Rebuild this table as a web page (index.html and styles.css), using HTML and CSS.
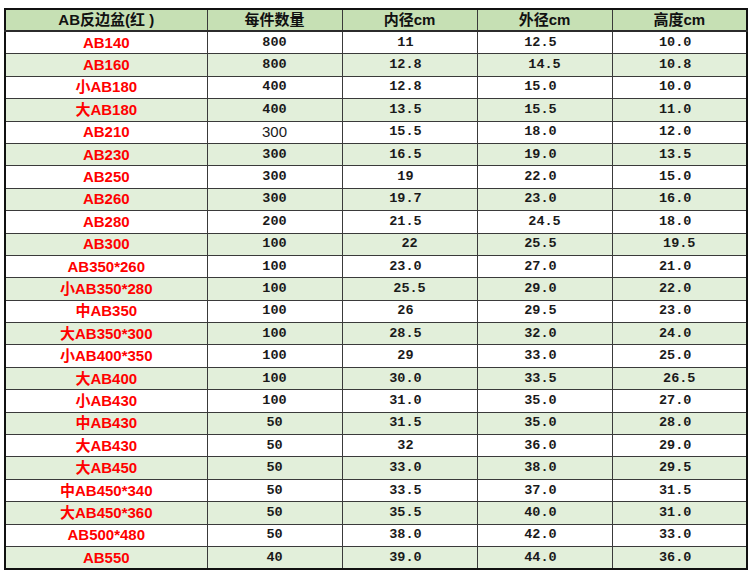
FILE: index.html
```html
<!DOCTYPE html>
<html lang="zh">
<head>
<meta charset="utf-8">
<link rel="stylesheet" href="styles.css">
</head>
<body>
<table class="spec">
<colgroup><col class="c1"><col class="c2"><col class="c2"><col class="c2"><col class="c2"></colgroup>
<thead>
<tr><th>AB反边盆(红 )</th><th>每件数量</th><th>内径cm</th><th>外径cm</th><th>高度cm</th></tr>
</thead>
<tbody>
<tr><td class="name">AB140</td><td>800</td><td>11 </td><td>12.5 </td><td>10.0 </td></tr>
<tr><td class="name">AB160</td><td>800</td><td>12.8 </td><td>14.5</td><td>10.8 </td></tr>
<tr><td class="name">小AB180</td><td>400</td><td>12.8 </td><td>15.0 </td><td>10.0 </td></tr>
<tr><td class="name">大AB180</td><td>400</td><td>13.5 </td><td>15.5 </td><td>11.0 </td></tr>
<tr><td class="name">AB210</td><td class="alt">300</td><td>15.5 </td><td>18.0 </td><td>12.0 </td></tr>
<tr><td class="name">AB230</td><td>300</td><td>16.5 </td><td>19.0 </td><td>13.5 </td></tr>
<tr><td class="name">AB250</td><td>300</td><td>19 </td><td>22.0 </td><td>15.0 </td></tr>
<tr><td class="name">AB260</td><td>300</td><td>19.7 </td><td>23.0 </td><td>16.0 </td></tr>
<tr><td class="name">AB280</td><td>200</td><td>21.5 </td><td>24.5</td><td>18.0 </td></tr>
<tr><td class="name">AB300</td><td>100</td><td>22</td><td>25.5 </td><td>19.5</td></tr>
<tr><td class="name">AB350*260</td><td>100</td><td>23.0 </td><td>27.0 </td><td>21.0 </td></tr>
<tr><td class="name">小AB350*280</td><td>100</td><td>25.5</td><td>29.0 </td><td>22.0 </td></tr>
<tr><td class="name">中AB350</td><td>100</td><td>26 </td><td>29.5 </td><td>23.0 </td></tr>
<tr><td class="name">大AB350*300</td><td>100</td><td>28.5 </td><td>32.0 </td><td>24.0 </td></tr>
<tr><td class="name">小AB400*350</td><td>100</td><td>29 </td><td>33.0 </td><td>25.0 </td></tr>
<tr><td class="name">大AB400</td><td>100</td><td>30.0 </td><td>33.5 </td><td>26.5</td></tr>
<tr><td class="name">小AB430</td><td>100</td><td>31.0 </td><td>35.0 </td><td>27.0 </td></tr>
<tr><td class="name">中AB430</td><td>50</td><td>31.5 </td><td>35.0 </td><td>28.0 </td></tr>
<tr><td class="name">大AB430</td><td>50</td><td>32 </td><td>36.0 </td><td>29.0 </td></tr>
<tr><td class="name">大AB450</td><td>50</td><td>33.0 </td><td>38.0 </td><td>29.5 </td></tr>
<tr><td class="name">中AB450*340</td><td>50</td><td>33.5 </td><td>37.0 </td><td>31.5 </td></tr>
<tr><td class="name">大AB450*360</td><td>50</td><td>35.5 </td><td>40.0 </td><td>31.0 </td></tr>
<tr><td class="name">AB500*480</td><td>50</td><td>38.0 </td><td>42.0 </td><td>33.0 </td></tr>
<tr><td class="name">AB550</td><td>40</td><td>39.0 </td><td>44.0 </td><td>36.0 </td></tr>
</tbody>
</table>
</body>
</html>
```
FILE: styles.css
```css
html, body {
  margin: 0;
  padding: 0;
  background: #ffffff;
}

.spec {
  margin: 8px 0 0 4px;
  width: 743px;
  table-layout: fixed;
  border-collapse: collapse;
  border: 2px solid #111;
}

.c1 { width: 202px; }
.c2 { width: 135px; }

.spec th,
.spec td {
  border: 1px solid #3a3a3a;
  padding: 0;
  text-align: center;
  vertical-align: middle;
  white-space: pre;
  line-height: 18px;
}

.spec th {
  height: 20px;
  background: #c6e0b4;
  border-bottom: 2px solid #2b2b2b;
  font-family: "Liberation Sans", "Noto Sans CJK SC", sans-serif;
  font-weight: bold;
  font-size: 15px;
  color: #111;
}

.spec td {
  height: 21.4px;
  font-family: "Liberation Mono", "Noto Sans CJK SC", monospace;
  font-weight: bold;
  font-size: 13.5px;
  color: #1a1a1a;
}

.spec tbody tr:nth-child(even) td {
  background: #e2efda;
}

.spec td.name {
  font-family: "Liberation Sans", "Noto Sans CJK SC", sans-serif;
  font-size: 15px;
  color: #ff0000;
}

.spec td.alt {
  font-family: "Liberation Sans", "Noto Sans CJK SC", sans-serif;
  font-weight: normal;
  font-size: 15px;
}
```
